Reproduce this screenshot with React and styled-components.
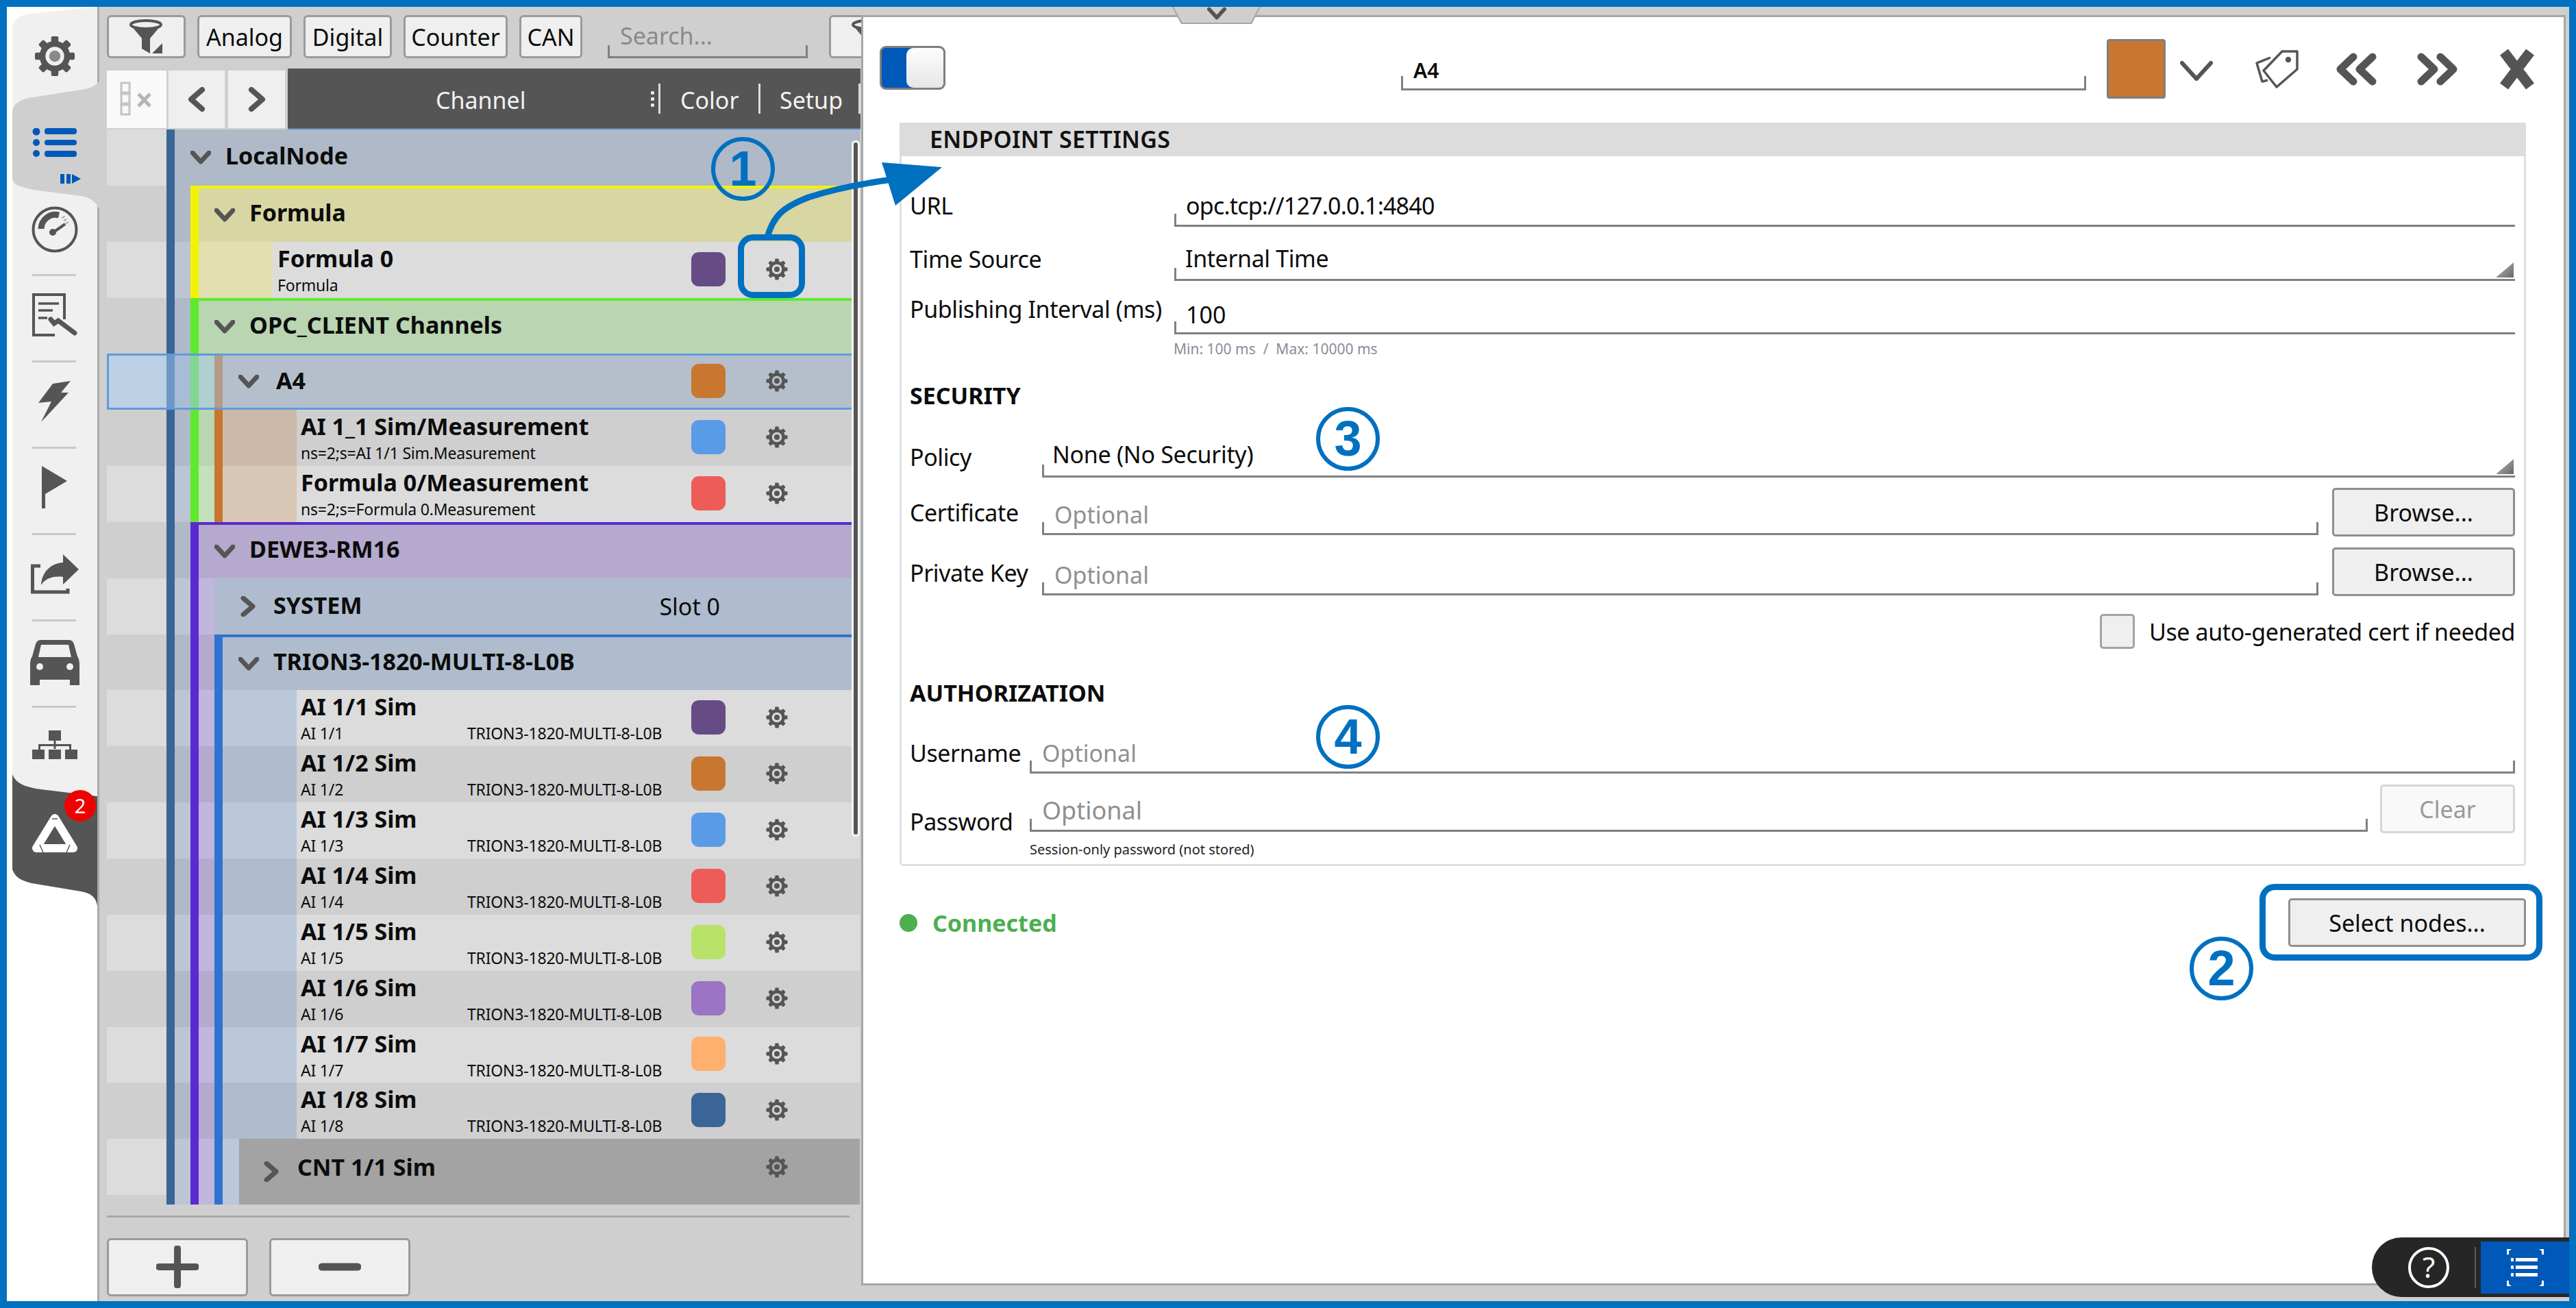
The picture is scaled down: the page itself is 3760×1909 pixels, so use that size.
import React from "react"
import styled, { createGlobalStyle } from "styled-components"

const GlobalStyle = createGlobalStyle`
  html, body { margin: 0; padding: 0; background: #0070c0; overflow: hidden; }
  * { box-sizing: border-box; }
`

const INK = "#555555"
const ANNOT = "#0070c0"

const Frame = styled.div`
  position: relative;
  width: 3760px;
  height: 1909px;
  border: 10px solid ${ANNOT};
  background: #cfcfcf;
  display: flex;
  overflow: hidden;
  font-family: "Noto Sans", sans-serif;
  font-size: 34px;
  color: #0c0c0c;
`

/* ---------- left rail ---------- */

const RailWrap = styled.div`
  width: 132px;
  flex: none;
  padding-left: 8px;
  background: #fff;
  position: relative;
  z-index: 2;
`

const Rail = styled.div`
  position: relative;
  width: 124px;
  height: 100%;
`

const RailShape = styled.div`
  position: absolute;
  inset: 0 -3px 0 0;
  background: ${({ $color }) => $color};
  clip-path: path("${({ $path }) => $path}");
`

const RailItems = styled.div`
  position: relative;
  display: flex;
  flex-direction: column;
`

const RailItem = styled.div`
  position: relative;
  height: ${({ $h }) => $h}px;
  padding-bottom: ${({ $pb }) => $pb || 0}px;
  padding-top: ${({ $pt }) => $pt || 0}px;
  display: flex;
  align-items: center;
  justify-content: center;

  ${({ $divider }) => $divider && `
    &::after {
      content: "";
      position: absolute;
      left: 29px;
      bottom: 0;
      width: 64px;
      height: 3px;
      background: #c9c9c9;
    }
  `}
`

const Marker = styled.svg`
  position: absolute;
  left: 70px;
  top: 104px;
`

const Badge = styled.div`
  position: absolute;
  left: 76px;
  top: 12px;
  width: 46px;
  height: 46px;
  border-radius: 50%;
  background: #f00000;
  color: #fff;
  font-size: 29px;
  line-height: 46px;
  text-align: center;
`

/* ---------- channel pane ---------- */

const ChannelPane = styled.div`
  width: 1115px;
  flex: none;
  border-left: 3px solid #a9a9a9;
  padding: 12px 2px 0 0;
  display: flex;
  flex-direction: column;
  overflow: hidden;
`

const Toolbar = styled.div`
  display: flex;
  align-items: stretch;
  gap: 17px;
  height: 63px;
  padding-left: 11px;
  width: 1400px;
`

const ToolButton = styled.button`
  font: inherit;
  color: inherit;
  width: ${({ $w }) => $w}px;
  flex: none;
  padding: 0;
  margin-left: ${({ $ml }) => $ml || 0}px;
  background: #efefef;
  border: 3px solid #9a9a9a;
  border-radius: 6px;
  display: flex;
  align-items: center;
  justify-content: center;
`

const Search = styled.div`
  position: relative;
  width: 292px;
  margin-left: 20px;
  padding-left: 18px;
  border-bottom: 3px solid #808080;
  color: #8a8a8a;
  line-height: 60px;
  white-space: nowrap;

  &::before, &::after {
    content: "";
    position: absolute;
    bottom: 0;
    width: 3px;
    height: 16px;
    background: #808080;
  }
  &::before { left: 0; }
  &::after { right: 0; }
`

const HeaderRow = styled.div`
  margin-top: 15px;
  margin-left: 11px;
  height: 89px;
  display: flex;
  align-items: center;
`

const HeaderCell = styled.div`
  width: ${({ $w }) => $w}px;
  height: 84px;
  flex: none;
  margin-right: ${({ $mr }) => $mr}px;
  background: ${({ $light }) => ($light ? "#f9f9f9" : "#efefef")};
  display: flex;
  align-items: center;
  justify-content: center;
`

const HeaderBar = styled.div`
  flex: 1;
  height: 89px;
  background: #555;
  color: #f2f2f2;
  display: flex;
  align-items: center;
  border-bottom: 2px solid #5a86b8;
`

const HeaderTitle = styled.div`
  width: ${({ $w }) => $w}px;
  flex: none;
  padding-left: ${({ $pl }) => $pl}px;
  padding-top: 4px;
  white-space: nowrap;
`

const HeaderSep = styled.div`
  width: 3px;
  height: 44px;
  flex: none;
  background: #dcdcdc;
  position: relative;
`

const HeaderDots = styled.div`
  position: absolute;
  left: -11px;
  top: 9px;
  width: 5px;
  height: 27px;
  background: radial-gradient(circle, #e6e6e6 2.5px, transparent 3px) 0 0 / 5px 9px;
`

const List = styled.div`
  position: relative;
  margin-left: 11px;
  display: flex;
  flex-direction: column;
`

const RowWrap = styled.div`
  position: relative;
  height: ${({ $h }) => $h || 81.85}px;
  display: flex;
  flex: none;

  ${({ $selected }) => $selected && `
    &::after {
      content: "";
      position: absolute;
      inset: 0;
      border: 3px solid #5f9bdc;
      pointer-events: none;
    }
  `}
`

const Gutter = styled.div`
  width: 87px;
  height: 81.85px;
  flex: none;
  background: ${({ $c }) => $c};
`

const Stripe = styled.div`
  width: ${({ $w }) => $w}px;
  flex: none;
  background: ${({ $c }) => $c};
`

const RowBody = styled.div`
  flex: 1;
  min-width: 0;
  display: flex;
  align-items: center;
  background: ${({ $bg }) => $bg};
  padding-left: ${({ $pl }) => $pl}px;
  border-top: ${({ $line }) => ($line ? `4px solid ${$line}` : "none")};
  padding-right: 89px;
`

const ChevronBox = styled.div`
  width: ${({ $w }) => $w}px;
  flex: none;
  display: flex;
  align-items: center;
`

const GroupName = styled.div`
  font-weight: 700;
  white-space: nowrap;
  margin-bottom: ${({ $lift }) => $lift}px;
`

const NameBlock = styled.div`
  flex: 1;
  align-self: stretch;
  display: flex;
  flex-direction: column;
  min-width: 0;
`

const LeafName = styled.div`
  font-weight: 700;
  line-height: 48px;
  white-space: nowrap;
`

const SubLine = styled.div`
  display: flex;
  font-size: 23px;
  line-height: 30px;
  white-space: nowrap;
  letter-spacing: -0.2px;
`

const SubAddress = styled.div`
  width: 243px;
  flex: none;
`

const Slot = styled.div`
  margin-left: auto;
  margin-right: 115px;
  white-space: nowrap;
`

const Swatch = styled.div`
  width: 50px;
  height: 50px;
  flex: none;
  margin-left: auto;
  margin-bottom: ${({ $lift }) => $lift || 0}px;
  border-radius: 11px;
  background: ${({ $c }) => $c};
`

const GearCell = styled.div`
  width: 64px;
  flex: none;
  margin-left: ${({ $ml }) => $ml};
  margin-bottom: ${({ $lift }) => $lift || 0}px;
  display: flex;
  justify-content: center;
`

const Scrollbar = styled.div`
  position: absolute;
  right: 0;
  top: 16px;
  bottom: 537px;
  width: 12px;
  background: #d4d4d4;
  border: 3px solid #f4f4f4;
  border-radius: 5px;

  &::after {
    content: "";
    position: absolute;
    inset: 0;
    background: #555;
    border-radius: 3px;
  }
`

const BottomRule = styled.div`
  margin: 16px 15px 0 11px;
  height: 3px;
  background: #a8a8a8;
`

const BottomBar = styled.div`
  margin: 30px 0 0 11px;
  display: flex;
  gap: 31px;
`

const BigButton = styled(ToolButton)`
  width: 206px;
  height: 85px;
`

/* ---------- settings dialog ---------- */

const Dialog = styled.div`
  position: relative;
  z-index: 1;
  flex: 1;
  margin: 12px 5px 23px 0;
  background: #fff;
  border: 3px solid #a6a6a6;
  display: flex;
  flex-direction: column;
`

const Notch = styled.div`
  position: absolute;
  left: 451px;
  top: -15px;
  width: 129px;
  height: 25px;
  background: #a6a6a6;
  clip-path: polygon(0 0, 100% 0, 90% 100%, 10% 100%);
  display: flex;
  justify-content: center;
  z-index: 3;

  &::before {
    content: "";
    position: absolute;
    inset: 0 2px 2px 2px;
    background: #cfcfcf;
    clip-path: polygon(0 0, 100% 0, 90% 100%, 10% 100%);
  }

  svg { position: relative; }
`

const DialogTop = styled.div`
  height: 154px;
  flex: none;
  padding: 42px 0 0 24px;
  display: flex;
  align-items: flex-start;
`

const Toggle = styled.div`
  width: 96px;
  height: 64px;
  flex: none;
  border: 3px solid #7f7f7f;
  border-radius: 9px;
  background: #0058b8;
  overflow: hidden;
  padding-left: 36px;
`

const ToggleThumb = styled.div`
  height: 100%;
  background: linear-gradient(#fdfdfd, #e6e6e6);
  border-radius: 10px 0 0 10px;
`

const NameField = styled.div`
  position: relative;
  width: 1000px;
  height: 65px;
  margin-left: 665px;
  padding-left: 18px;
  border-bottom: 3px solid #808080;
  font-weight: 600;
  font-size: 30px;
  line-height: 72px;

  &::before, &::after {
    content: "";
    position: absolute;
    bottom: 0;
    width: 3px;
    height: 18px;
    background: #808080;
  }
  &::before { left: 0; }
  &::after { right: 0; }
`

const ColorBox = styled.div`
  width: 86px;
  height: 87px;
  flex: none;
  margin: -10px 0 0 30px;
  background: #c87731;
  border: 3px solid #7f7f7f;
  border-radius: 4px;
`

const TopIcon = styled.svg`
  flex: none;
  margin-left: ${({ $ml }) => $ml}px;
  margin-top: ${({ $mt }) => $mt}px;
`

const Panel = styled.div`
  margin-left: 53px;
  width: 2374px;
  flex: none;
`

const PanelHead = styled.div`
  height: 49px;
  background: #dcdcdc;
  padding-left: 44px;
  font-weight: 600;
  font-size: 34px;
  letter-spacing: 0.3px;
  line-height: 49px;
  color: #111;
`

const PanelBody = styled.div`
  border: 3px solid #dfdfdf;
  border-top: none;
  border-radius: 0 0 5px 5px;
  padding: 0 13px 11px 12px;
  display: flex;
  flex-direction: column;
`

const FormRow = styled.div`
  height: ${({ $h }) => $h}px;
  flex: none;
  display: flex;
  align-items: flex-end;
  justify-content: ${({ $end }) => ($end ? "flex-end" : "flex-start")};
`

const FieldLabel = styled.div`
  width: ${({ $w }) => $w}px;
  flex: none;
  line-height: 46px;
  white-space: nowrap;
  letter-spacing: -0.4px;
  margin-bottom: ${({ $lift }) => $lift}px;
`

const Field = styled.div`
  position: relative;
  flex: 1;
  min-width: 0;
  padding: 0 0 ${({ $pb }) => $pb}px ${({ $pl }) => $pl}px;
  margin-bottom: ${({ $mb }) => $mb || 0}px;
  border-bottom: 3px solid #808080;
  line-height: 46px;
  white-space: nowrap;
  color: ${({ $ph }) => ($ph ? "#8f8f8f" : "inherit")};
  font-size: ${({ $size }) => $size || 34}px;
  letter-spacing: ${({ $ls }) => $ls || 0}px;

  &::before {
    content: "";
    position: absolute;
    left: 0;
    bottom: 0;
    width: 3px;
    height: 16px;
    background: #808080;
  }

  ${({ $tickEnd }) => $tickEnd && `
    &::after {
      content: "";
      position: absolute;
      right: 0;
      bottom: 0;
      width: 3px;
      height: 16px;
      background: #808080;
    }
  `}
`

const SelectCorner = styled.div`
  position: absolute;
  right: 2px;
  bottom: 2px;
  width: 26px;
  height: 22px;
  background: linear-gradient(135deg, #bcbcbc, #666);
  clip-path: polygon(100% 0, 100% 100%, 0 100%);
`

const Hint = styled.div`
  font-size: ${({ $size }) => $size}px;
  line-height: 20px;
  padding-left: ${({ $pl }) => $pl}px;
  color: ${({ $c }) => $c};
  white-space: nowrap;
`

const SectionTitle = styled.div`
  font-weight: 700;
  font-size: 34px;
  line-height: 46px;
`

const DialogButton = styled.button`
  font: inherit;
  color: ${({ disabled }) => (disabled ? "#9a9a9a" : "inherit")};
  width: ${({ $w }) => $w}px;
  height: ${({ $h }) => $h || 71}px;
  flex: none;
  margin-left: ${({ $ml }) => $ml}px;
  padding: 0;
  background: ${({ disabled }) => (disabled ? "#f9f9f9" : "#efefef")};
  border: 3px solid ${({ disabled }) => (disabled ? "#d5d5d5" : "#8f8f8f")};
  border-radius: 5px;
`

const CheckRow = styled.div`
  display: flex;
  align-items: center;
  gap: 21px;
  height: 51px;
  letter-spacing: -0.4px;
`

const CheckBox = styled.div`
  width: 51px;
  height: 51px;
  flex: none;
  background: #efefef;
  border: 3px solid #a3a3a3;
  border-radius: 5px;
`

const StatusRow = styled.div`
  margin: 47px 0 0 53px;
  width: 2374px;
  display: flex;
  align-items: flex-start;
  justify-content: space-between;
`

const Status = styled.div`
  display: flex;
  align-items: center;
  height: 71px;
  padding-top: 1px;
  gap: 22px;
  color: #4caf50;
  font-weight: 700;
`

const StatusDot = styled.div`
  width: 26px;
  height: 26px;
  border-radius: 50%;
  background: #4caf50;
`

/* ---------- overlays ---------- */

const HelpPill = styled.div`
  position: absolute;
  right: 0;
  bottom: 6px;
  width: 288px;
  height: 87px;
  background: #262626;
  border-radius: 44px 0 0 44px;
  z-index: 5;
  display: flex;
  align-items: center;
  color: #fff;
`

const HelpCircle = styled.div`
  width: 60px;
  height: 60px;
  margin-left: 53px;
  flex: none;
  border: 4px solid #fff;
  border-radius: 50%;
  font-size: 42px;
  line-height: 50px;
  text-align: center;
`

const HelpSep = styled.div`
  width: 2px;
  height: 60px;
  flex: none;
  margin-left: 37px;
  background: #5a5a5a;
`

const HelpActive = styled.div`
  flex: 1;
  margin-left: 7px;
  height: 76px;
  background: #0058b8;
  display: flex;
  align-items: center;
  justify-content: center;
`

const CalloutBox = styled.div`
  position: absolute;
  left: ${({ $x }) => $x - 10}px;
  top: ${({ $y }) => $y - 10}px;
  width: ${({ $w }) => $w}px;
  height: ${({ $h }) => $h}px;
  border: 9px solid ${ANNOT};
  border-radius: 22px;
  z-index: 6;
`

const CalloutNumber = styled.div`
  position: absolute;
  left: ${({ $x }) => $x - 10}px;
  top: ${({ $y }) => $y - 10}px;
  width: 93px;
  height: 93px;
  border: 6px solid ${ANNOT};
  border-radius: 50%;
  color: ${ANNOT};
  font-family: "Liberation Sans", sans-serif;
  font-weight: 700;
  font-size: 72px;
  line-height: 80px;
  text-align: center;
  z-index: 6;
`

const CalloutArrow = styled.svg`
  position: absolute;
  left: 1090px;
  top: 210px;
  z-index: 6;
`

/* ---------- icons ---------- */

const Gear = ({ size = 32, hole }) => (
  <svg width={size} height={size} viewBox="0 0 32 32">
    {[0, 45, 90, 135, 180, 225, 270, 315].map((a) => (
      <rect key={a} x="13.2" y="0.5" width="5.6" height="6" rx="1.2" fill={INK} transform={`rotate(${a} 16 16)`} />
    ))}
    <circle cx="16" cy="16" r="9.6" fill="none" stroke={INK} strokeWidth="4.6" />
    <circle cx="16" cy="16" r={hole ? 4.4 : 4} fill={hole ? "#8a8a8a" : INK} />
  </svg>
)

const ChevronDown = ({ w = 30, h = 20, sw = 7, color = INK }) => (
  <svg width={w} height={h} viewBox="0 0 30 20">
    <path d="M3 3 L15 16 L27 3" fill="none" stroke={color} strokeWidth={sw} strokeLinecap="round" strokeLinejoin="round" />
  </svg>
)

const ChevronRight = () => (
  <svg width="22" height="30" viewBox="0 0 22 30">
    <path d="M4 3 L18 15 L4 27" fill="none" stroke={INK} strokeWidth="7" strokeLinecap="round" strokeLinejoin="round" />
  </svg>
)

const NavArrow = ({ flip }) => (
  <svg width="28" height="36" viewBox="0 0 28 36">
    <path d={flip ? "M6 4 L22 18 L6 32" : "M22 4 L6 18 L22 32"} fill="none" stroke={INK} strokeWidth="8" strokeLinecap="round" strokeLinejoin="round" />
  </svg>
)

const Funnel = () => (
  <svg width="50" height="52" viewBox="0 0 50 52">
    <ellipse cx="24" cy="8" rx="22" ry="6" fill="none" stroke={INK} strokeWidth="4" />
    <path d="M2 9 Q24 20 46 9 L30 28 V50 L18 43 V28 Z" fill={INK} />
    <path d="M33 50 L48 35 V50 Z" fill={INK} />
  </svg>
)

const ColumnsIcon = () => (
  <svg width="50" height="52" viewBox="0 0 50 52">
    <g fill="none" stroke="#c4c4c4" strokeWidth="3">
      <rect x="2" y="2" width="12" height="14" />
      <rect x="2" y="18" width="12" height="14" />
      <rect x="2" y="34" width="12" height="14" />
    </g>
    <path d="M27 18 L44 36 M44 18 L27 36" stroke="#b5b5b5" strokeWidth="5" />
  </svg>
)

const ListIcon = () => (
  <svg width="66" height="42" viewBox="0 0 66 42" fill="#0058b8">
    <circle cx="6" cy="5" r="5.5" />
    <circle cx="6" cy="21" r="5" />
    <circle cx="6" cy="37" r="5" />
    <rect x="18" y="0" width="47" height="9" rx="4" />
    <rect x="18" y="17" width="47" height="8" rx="4" />
    <rect x="18" y="33" width="47" height="9" rx="4" />
  </svg>
)

const GaugeIcon = () => (
  <svg width="68" height="68" viewBox="0 0 68 68">
    <circle cx="34" cy="34" r="31.5" fill="none" stroke={INK} strokeWidth="4" />
    <path d="M14 33 A21 21 0 0 1 40 13" fill="none" stroke={INK} strokeWidth="9" />
    <path d="M32 38 L49 26" stroke={INK} strokeWidth="4" />
    <circle cx="31" cy="38" r="5" fill={INK} />
    <path d="M46 15 L54 28" stroke="#aaa" strokeWidth="5" strokeDasharray="2 3" />
  </svg>
)

const DocWrenchIcon = () => (
  <svg width="66" height="64" viewBox="0 0 66 64">
    <path d="M33 61 H2 V2 H47 V38" fill="none" stroke={INK} strokeWidth="4" />
    <g stroke={INK} strokeWidth="3.5">
      <path d="M9 15 H39" />
      <path d="M9 25 H30" />
      <path d="M9 36 H22" />
    </g>
    <path d="M27 38 L32 44 L38 40 L62 58" fill="none" stroke={INK} strokeWidth="7" strokeLinecap="round" />
  </svg>
)

const BoltIcon = () => (
  <svg width="48" height="60" viewBox="0 0 48 60">
    <path d="M21 4 L47 0 L33 17 L44 17 L4 60 L19 30 L0 32 Z" fill={INK} />
  </svg>
)

const FlagIcon = () => (
  <svg width="38" height="64" viewBox="0 0 38 64">
    <path d="M0 0 L37 22 L5 41 V62 H0 Z" fill={INK} />
  </svg>
)

const ShareIcon = () => (
  <svg width="70" height="58" viewBox="0 0 70 58">
    <path d="M14 17 H2.5 V55 H54 V50" fill="none" stroke={INK} strokeWidth="5" />
    <path d="M47 0 L70 22 L47 44 V33 C32 31 20 36 15 45 C16 25 30 13 47 12 Z" fill={INK} />
  </svg>
)

const CarIcon = () => (
  <svg width="72" height="66" viewBox="0 0 72 66">
    <path d="M15 0 H57 Q62 0 64 6 L69 24 Q72 28 72 36 V66 H58 V58 H14 V66 H0 V36 Q0 28 3 24 L8 6 Q10 0 15 0 Z" fill={INK} />
    <path d="M16 7 H56 L60 25 H12 Z" fill="#f0f0f0" />
    <circle cx="14" cy="39" r="5" fill="#f0f0f0" />
    <circle cx="58" cy="39" r="5" fill="#f0f0f0" />
  </svg>
)

const NetworkIcon = () => (
  <svg width="66" height="42" viewBox="0 0 66 42" fill={INK}>
    <rect x="24" y="0" width="18" height="15" />
    <rect x="31.5" y="15" width="3" height="12" />
    <rect x="9" y="20" width="48" height="3" />
    <rect x="9" y="20" width="3" height="8" />
    <rect x="54" y="20" width="3" height="8" />
    <rect x="0" y="28" width="18" height="14" />
    <rect x="24" y="28" width="18" height="14" />
    <rect x="48" y="28" width="18" height="14" />
  </svg>
)

const LogoIcon = () => (
  <svg width="68" height="62" viewBox="0 0 68 62">
    <path d="M34 9 L61 53 H7 Z" fill="none" stroke="#fff" strokeWidth="12" strokeLinejoin="round" />
    <path d="M12 48 L17 59 M56 48 L51 59 M30 10 L38 10" stroke={INK} strokeWidth="1.5" />
  </svg>
)

const TagIcon = () => (
  <svg width="63" height="56" viewBox="0 0 63 56" fill="none" stroke={INK} strokeWidth="3.5" strokeLinejoin="round">
    <path d="M39 2 H61 V28 L31 54 L12 30 Z" />
    <path d="M22 11 L2 19 L10 46 L18 44" />
    <circle cx="48" cy="14" r="2.5" fill={INK} />
  </svg>
)

const DoubleChevron = ({ flip }) => (
  <svg width="62" height="48" viewBox="0 0 62 48" fill="none" stroke={INK} strokeWidth="11" strokeLinecap="round" strokeLinejoin="round">
    <g transform={flip ? "matrix(-1 0 0 1 62 0)" : undefined}>
      <path d="M26 6 L7 24 L26 42" />
      <path d="M54 6 L35 24 L54 42" />
    </g>
  </svg>
)

const CloseIcon = () => (
  <svg width="56" height="58" viewBox="0 0 56 58">
    <path d="M9 4 L47 54 M47 4 L9 54" stroke={INK} strokeWidth="15" />
  </svg>
)

const FocusListIcon = () => (
  <svg width="54" height="54" viewBox="0 0 54 54" fill="#fff">
    <rect x="13" y="13" width="32" height="5" />
    <rect x="13" y="24" width="32" height="5" />
    <rect x="13" y="35" width="32" height="5" />
    <rect x="6" y="13" width="4" height="5" />
    <rect x="6" y="24" width="4" height="5" />
    <rect x="6" y="35" width="4" height="5" />
    <path d="M0 0 H7 L3 3 V8 H0 Z M54 0 H47 L51 3 V8 H54 Z M0 54 H7 L3 51 V46 H0 Z M54 54 H47 L51 51 V46 H54 Z" />
  </svg>
)

/* ---------- data ---------- */

const TINT = {
  slate: { d: "#afb9c7", l: "#bcc5d4" },
  yellow: { d: "#d8d6a3", l: "#e2e0b0" },
  green: { d: "#b9d5b1", l: "#c3e2bb" },
  orange: { d: "#ccb9a9", l: "#d9c7b6" },
  purple: { d: "#b5aacd", l: "#c1b6dc" },
  blue: { d: "#afbccd", l: "#bac8da" },
}

const BAR = {
  node: "#3a6596",
  yellow: "#f3f300",
  green: "#5eea2e",
  orange: "#c8762f",
  purple: "#5a2ad0",
  blue: "#2f73cf",
}

const SWATCH = {
  plum: "#664b85",
  orange: "#c87731",
  sky: "#5a9be8",
  red: "#ee5c58",
  lime: "#b9e268",
  violet: "#9b74c4",
  peach: "#ffb06e",
  navy: "#3b6596",
}

const trionLeaf = (n, color) => ({
  path: ["slate", "purple"],
  bars: ["purple", "blue"],
  leaf: true,
  pale: "blue",
  name: `AI 1/${n} Sim`,
  sub: `AI 1/${n}`,
  device: "TRION3-1820-MULTI-8-L0B",
  color,
})

const ROWS = [
  { head: true, root: true, name: "LocalNode", bg: "#afb9c7", pl: 23, box: 51, lift: 5 },
  { head: true, bars: ["yellow"], path: ["slate"], name: "Formula", bg: TINT.yellow.d, line: BAR.yellow, pl: 23, box: 51, lift: 8 },
  { leaf: true, bars: ["yellow"], path: ["slate"], pale: "yellow", paleW: 108, pl: 7, name: "Formula 0", sub: "Formula", color: SWATCH.plum },
  { head: true, bars: ["green"], path: ["slate"], name: "OPC_CLIENT Channels", bg: TINT.green.d, line: BAR.green, pl: 23, box: 51, lift: 7 },
  { head: true, selected: true, name: "A4", bg: "#b5bfcb", pl: 23, box: 55, color: SWATCH.orange, gear: true, lift: 4 },
  { leaf: true, path: ["slate", "green"], bars: ["green", "orange"], pale: "orange", name: "AI 1_1 Sim/Measurement", sub: "ns=2;s=AI 1/1 Sim.Measurement", color: SWATCH.sky },
  { leaf: true, path: ["slate", "green"], bars: ["green", "orange"], pale: "orange", name: "Formula 0/Measurement", sub: "ns=2;s=Formula 0.Measurement", color: SWATCH.red },
  { head: true, bars: ["purple"], path: ["slate"], name: "DEWE3-RM16", bg: TINT.purple.d, line: BAR.purple, pl: 23, box: 51, lift: 8 },
  { head: true, path: ["slate", "purple"], bars: ["purple"], name: "SYSTEM", bg: "#afbccf", pl: 38, box: 48, closed: true, slot: "Slot 0", lift: 4 },
  { head: true, path: ["slate", "purple"], bars: ["purple", "blue"], name: "TRION3-1820-MULTI-8-L0B", bg: TINT.blue.d, line: BAR.blue, pl: 23, box: 51, lift: 8 },
  trionLeaf(1, SWATCH.plum),
  trionLeaf(2, SWATCH.orange),
  trionLeaf(3, SWATCH.sky),
  trionLeaf(4, SWATCH.red),
  trionLeaf(5, SWATCH.lime),
  trionLeaf(6, SWATCH.violet),
  trionLeaf(7, SWATCH.peach),
  trionLeaf(8, SWATCH.navy),
  { head: true, cnt: true, name: "CNT 1/1 Sim", bg: "#a3a3a3", pl: 36, box: 49, closed: true, gear: true, path: ["slate", "purple"], bars: ["purple", "blue"], h: 95.5, lift: 14 },
]

// stripes drawn left of the row body, nested one per tree level
const buildStripes = (row, light) => {
  const shade = (t) => (light ? TINT[t].l : TINT[t].d)
  if (row.selected) {
    return [
      [12, "#6e97c6"],
      [23, "#a9bcd6"],
      [12, "#80d890"],
      [23, "#b0cfd0"],
      [12, "#b39b87"],
    ]
  }
  const out = [[12, BAR.node]]
  if (row.root) return out
  const bars = row.bars || []
  const path = row.path || []
  path.forEach((t, i) => {
    out.push([23, shade(t)])
    if (bars[i]) out.push([12, BAR[bars[i]]])
  })
  if (row.pale) out.push([row.paleW || 108, shade(row.pale)])
  if (row.cnt) out.push([24, shade("blue")])
  return out
}

const ChannelRow = ({ row, index }) => {
  const light = index % 2 === 0
  const stripes = buildStripes(row, light)
  const bodyBg = row.leaf ? (light ? "#dcdcdc" : "#cfcfcf") : row.bg
  const gutter = row.selected ? "#bdd0e5" : light ? "#dcdcdc" : "#cfcfcf"
  return (
    <RowWrap $h={row.h} $selected={row.selected}>
      <Gutter $c={gutter} />
      {stripes.map(([w, c], i) => (
        <Stripe key={i} $w={w} $c={c} />
      ))}
      <RowBody $bg={bodyBg} $pl={row.leaf ? row.pl || 6 : row.pl} $line={row.line}>
        {row.head && (
          <>
            <ChevronBox $w={row.box}>{row.closed ? <ChevronRight /> : <ChevronDown />}</ChevronBox>
            <GroupName $lift={row.lift}>{row.name}</GroupName>
          </>
        )}
        {row.leaf && (
          <NameBlock>
            <LeafName>{row.name}</LeafName>
            <SubLine>
              <SubAddress>{row.sub}</SubAddress>
              {row.device}
            </SubLine>
          </NameBlock>
        )}
        {row.slot && <Slot>{row.slot}</Slot>}
        {row.color && <Swatch $c={row.color} $lift={2} />}
        {row.gear && (
          <GearCell $ml={row.color ? "43px" : "auto"} $lift={row.cnt ? 14 : 2}>
            <Gear />
          </GearCell>
        )}
        {row.leaf && (
          <GearCell $ml="43px" $lift={2}>
            <Gear />
          </GearCell>
        )}
      </RowBody>
    </RowWrap>
  )
}

const App = () => {
  return (
    <Frame>
      <GlobalStyle />

      <RailWrap>
        <Rail>
          <RailShape $color="#f0f0f0" $path="M0 32 C0 20 8 13 25 10 L124 0 L124 1150 L0 1150 Z" />
          <RailShape $color="#555555" $path="M0 1120 C6 1136 24 1140 50 1143 L124 1152 L124 1312 C122 1298 112 1293 100 1291 L28 1279 C12 1275 4 1270 0 1259 Z" />
          <RailShape $color="#cfcfcf" $path="M127 108 C121 116 114 119 100 121 L30 132 C10 135 0 142 0 155 L0 250 C2 262 10 261 30 267 L100 276 C116 279 122 285 127 296 Z" />
          <RailItems>
            <RailItem $h={140} $pt={4}>
              <Gear size={60} hole />
            </RailItem>
            <RailItem $h={116}>
              <ListIcon />
              <Marker width="30" height="14" viewBox="0 0 30 14" fill="#0058b8">
                <rect x="0" y="0" width="6" height="14" />
                <rect x="9" y="0" width="6" height="14" />
                <path d="M17 0 L30 7 L17 14 Z" />
              </Marker>
            </RailItem>
            <RailItem $h={137} $divider>
              <GaugeIcon />
            </RailItem>
            <RailItem $h={126} $pb={12} $divider>
              <DocWrenchIcon />
            </RailItem>
            <RailItem $h={126} $pb={12} $divider>
              <BoltIcon />
            </RailItem>
            <RailItem $h={126} $pb={12} $divider>
              <FlagIcon />
            </RailItem>
            <RailItem $h={126} $pb={12} $divider>
              <ShareIcon />
            </RailItem>
            <RailItem $h={126} $pb={6} $divider>
              <CarIcon />
            </RailItem>
            <RailItem $h={108}>
              <NetworkIcon />
            </RailItem>
            <RailItem $h={150}>
              <LogoIcon />
              <Badge>2</Badge>
            </RailItem>
          </RailItems>
        </Rail>
      </RailWrap>

      <ChannelPane>
        <Toolbar>
          <ToolButton $w={115}>
            <Funnel />
          </ToolButton>
          <ToolButton $w={138}>Analog</ToolButton>
          <ToolButton $w={129}>Digital</ToolButton>
          <ToolButton $w={152}>Counter</ToolButton>
          <ToolButton $w={92}>CAN</ToolButton>
          <Search>Search...</Search>
          <ToolButton $w={115} $ml={14}>
            <Funnel />
          </ToolButton>
        </Toolbar>

        <HeaderRow>
          <HeaderCell $w={87} $mr={3} $light>
            <ColumnsIcon />
          </HeaderCell>
          <HeaderCell $w={82} $mr={5}>
            <NavArrow />
          </HeaderCell>
          <HeaderCell $w={83} $mr={4}>
            <NavArrow flip />
          </HeaderCell>
          <HeaderBar>
            <HeaderTitle $w={541} $pl={216}>Channel</HeaderTitle>
            <HeaderSep>
              <HeaderDots />
            </HeaderSep>
            <HeaderTitle $w={143} $pl={29}>Color</HeaderTitle>
            <HeaderSep />
            <HeaderTitle $w={143} $pl={28}>Setup</HeaderTitle>
            <HeaderSep />
          </HeaderBar>
        </HeaderRow>

        <List>
          {ROWS.map((row, i) => (
            <ChannelRow key={row.name} row={row} index={i} />
          ))}
          <Scrollbar />
        </List>

        <BottomRule />
        <BottomBar>
          <BigButton>
            <svg width="62" height="62" viewBox="0 0 62 62">
              <path d="M31 4 V58 M4 31 H58" stroke={INK} strokeWidth="10" strokeLinecap="round" />
            </svg>
          </BigButton>
          <BigButton>
            <svg width="62" height="14" viewBox="0 0 62 14">
              <path d="M5 7 H57" stroke={INK} strokeWidth="11" strokeLinecap="round" />
            </svg>
          </BigButton>
        </BottomBar>
      </ChannelPane>

      <Dialog>
        <Notch>
          <ChevronDown w={28} h={20} sw={6} />
        </Notch>

        <DialogTop>
          <Toggle>
            <ToggleThumb />
          </Toggle>
          <NameField>A4</NameField>
          <ColorBox />
          <TopIcon $ml={21} $mt={21} width="48" height="30" viewBox="0 0 48 30">
            <path d="M3 4 L24 27 L45 4" fill="none" stroke={INK} strokeWidth="6" strokeLinecap="round" strokeLinejoin="round" />
          </TopIcon>
          <TopIcon as="div" $ml={62} $mt={6}>
            <TagIcon />
          </TopIcon>
          <TopIcon as="div" $ml={54} $mt={10}>
            <DoubleChevron />
          </TopIcon>
          <TopIcon as="div" $ml={55} $mt={10}>
            <DoubleChevron flip />
          </TopIcon>
          <TopIcon as="div" $ml={58} $mt={5}>
            <CloseIcon />
          </TopIcon>
        </DialogTop>

        <Panel>
          <PanelHead>ENDPOINT SETTINGS</PanelHead>
          <PanelBody>
            <FormRow $h={103}>
              <FieldLabel $w={386} $lift={8}>URL</FieldLabel>
              <Field $pb={5} $pl={17} $ls={-0.8}>opc.tcp://127.0.0.1:4840</Field>
            </FormRow>
            <FormRow $h={79}>
              <FieldLabel $w={386} $lift={9}>Time Source</FieldLabel>
              <Field $pb={7} $pl={16} $ls={-0.4}>
                Internal Time
                <SelectCorner />
              </Field>
            </FormRow>
            <FormRow $h={78}>
              <FieldLabel $w={386} $lift={14}>Publishing Interval (ms)</FieldLabel>
              <Field $pb={3} $pl={17}>100</Field>
            </FormRow>
            <FormRow $h={31}>
              <Hint $size={21} $pl={385} $c="#8c8c9a">Min: 100 ms &nbsp;/&nbsp; Max: 10000 ms</Hint>
            </FormRow>

            <FormRow $h={81}>
              <SectionTitle>SECURITY</SectionTitle>
            </FormRow>
            <FormRow $h={97}>
              <FieldLabel $w={193} $lift={7}>Policy</FieldLabel>
              <Field $pb={8} $pl={15} $ls={-0.3}>
                None (No Security)
                <SelectCorner />
              </Field>
            </FormRow>
            <FormRow $h={86}>
              <FieldLabel $w={193} $lift={12}>Certificate</FieldLabel>
              <Field $pb={4} $pl={18} $mb={2} $ph $tickEnd>Optional</Field>
              <DialogButton $w={267} $ml={20}>Browse...</DialogButton>
            </FormRow>
            <FormRow $h={87}>
              <FieldLabel $w={193} $lift={11}>Private Key</FieldLabel>
              <Field $pb={4} $pl={18} $mb={1} $ph $tickEnd>Optional</Field>
              <DialogButton $w={267} $ml={20}>Browse...</DialogButton>
            </FormRow>
            <FormRow $h={77} $end>
              <CheckRow>
                <CheckBox />
                Use auto-generated cert if needed
              </CheckRow>
            </FormRow>

            <FormRow $h={87}>
              <SectionTitle>AUTHORIZATION</SectionTitle>
            </FormRow>
            <FormRow $h={95}>
              <FieldLabel $w={175} $lift={7}>Username</FieldLabel>
              <Field $pb={4} $pl={18} $ph $tickEnd>Optional</Field>
            </FormRow>
            <FormRow $h={87}>
              <FieldLabel $w={175} $lift={-6}>Password</FieldLabel>
              <Field $pb={5} $pl={18} $mb={2} $ph $tickEnd $size={36}>Optional</Field>
              <DialogButton $w={197} $ml={18} disabled>Clear</DialogButton>
            </FormRow>
            <FormRow $h={34}>
              <Hint $size={20} $pl={175} $c="#222">Session-only password (not stored)</Hint>
            </FormRow>
          </PanelBody>
        </Panel>

        <StatusRow>
          <Status>
            <StatusDot />
            Connected
          </Status>
          <DialogButton $w={347} $ml={0}>Select nodes...</DialogButton>
        </StatusRow>
      </Dialog>

      <HelpPill>
        <HelpCircle>?</HelpCircle>
        <HelpSep />
        <HelpActive>
          <FocusListIcon />
        </HelpActive>
      </HelpPill>

      <CalloutNumber $x={1038} $y={200}>1</CalloutNumber>
      <CalloutBox $x={1077} $y={342} $w={98} $h={93} />
      <CalloutArrow width="290" height="140" viewBox="1090 210 290 140">
        <path d="M1109 340 C1118 304 1134 292 1170 278 C1204 267 1240 259 1292 252" fill="none" stroke={ANNOT} strokeWidth="9" />
        <polygon points="1277,227 1365,234 1297,290" fill={ANNOT} />
      </CalloutArrow>
      <CalloutBox $x={3298} $y={1290} $w={413} $h={112} />
      <CalloutNumber $x={3196} $y={1367}>2</CalloutNumber>
      <CalloutNumber $x={1921} $y={594}>3</CalloutNumber>
      <CalloutNumber $x={1921} $y={1029}>4</CalloutNumber>
    </Frame>
  )
}

export default App
